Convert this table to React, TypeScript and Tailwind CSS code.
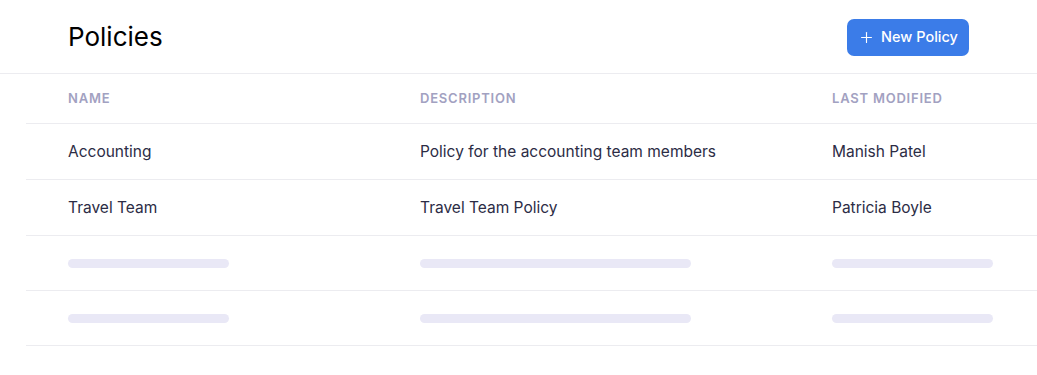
import { Plus } from 'lucide-react';

const rows = [
  { name: 'Accounting', description: 'Policy for the accounting team members', modified: 'Manish Patel' },
  { name: 'Travel Team', description: 'Travel Team Policy', modified: 'Patricia Boyle' },
];

function Bar({ w }: { w: string }) {
  return <div className={`h-[9px] rounded-full bg-[#e9e8f6] ${w}`} />;
}

export default function App() {
  return (
    <div className="h-[375px] w-[1037px] bg-white font-['Inter',sans-serif]">
      <header className="flex h-[74px] items-center justify-between border-b border-[#ececf0] px-[68px] pt-[1px]">
        <h1 className="text-[26px] leading-none text-black">Policies</h1>
        <button className="flex h-[37px] w-[122px] items-center justify-center gap-[6px] rounded-[7px] bg-[#3b7ce8] text-[14.5px] font-medium text-white">
          <Plus size={17} strokeWidth={1.6} />
          New Policy
        </button>
      </header>

      <div className="ml-[26px]">
        <div className="grid h-[50px] grid-cols-[352px_412px_1fr] items-center border-b border-[#ececf0] pl-[42px] pt-[1px] text-[13px] font-semibold tracking-[0.06em] text-[#a2a1c1]">
          <span>NAME</span>
          <span>DESCRIPTION</span>
          <span>LAST MODIFIED</span>
        </div>

        {rows.map((r) => (
          <div
            key={r.name}
            className="grid h-[56px] grid-cols-[352px_412px_1fr] items-center border-b border-[#ececf0] pl-[42px] pt-[1px] text-[15.5px] text-[#2c2c45]"
          >
            <span>{r.name}</span>
            <span>{r.description}</span>
            <span>{r.modified}</span>
          </div>
        ))}

        {[0, 1].map((i) => (
          <div
            key={i}
            className="grid h-[55px] grid-cols-[352px_412px_1fr] items-center border-b border-[#ececf0] pl-[42px]"
          >
            <Bar w="w-[161px]" />
            <Bar w="w-[271px]" />
            <Bar w="w-[161px]" />
          </div>
        ))}
      </div>
    </div>
  );
}
